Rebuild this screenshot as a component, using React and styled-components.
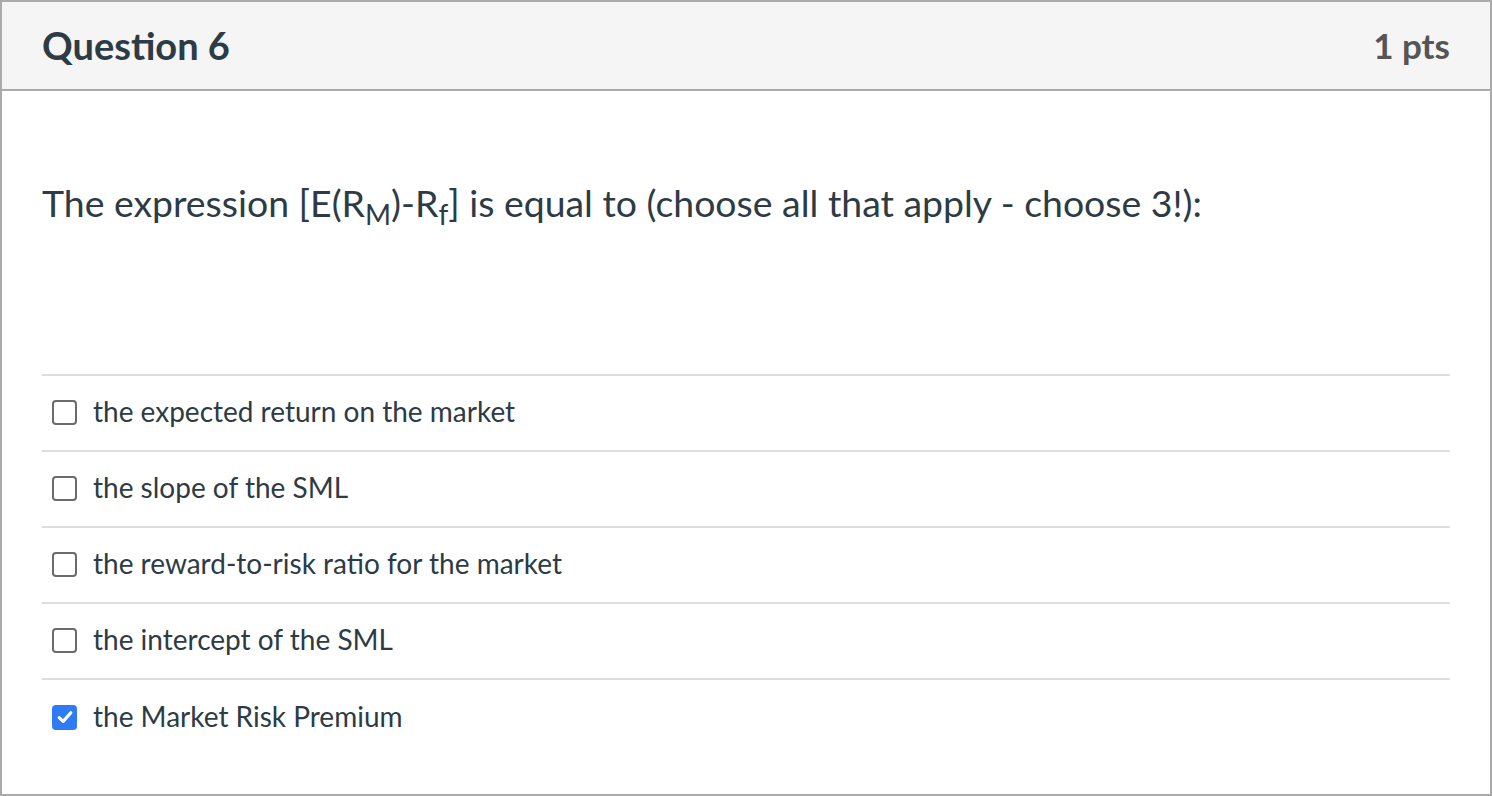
import styled, { createGlobalStyle } from "styled-components";

const Global = createGlobalStyle`
  html, body {
    margin: 0;
    padding: 0;
    background: #fff;
  }
  * { box-sizing: border-box; }
`;

const Card = styled.div`
  border: 2px solid #aaaaaa;
  height: 796px;
  display: flex;
  flex-direction: column;
  font-family: Lato, "Open Sans", sans-serif;
  color: #2d3b45;
`;

const Header = styled.div`
  display: flex;
  align-items: center;
  justify-content: space-between;
  height: 89px;
  padding: 0 40px 0 40px;
  background: #f5f5f5;
  border-bottom: 2px solid #aaaaaa;
`;

const Title = styled.h2`
  margin: 0;
  font-size: 38px;
  font-weight: 700;
  color: #2d3b45;
  padding-bottom: 2px;
`;

const Points = styled.div`
  font-size: 35px;
  font-weight: 700;
  color: #555555;
  padding-bottom: 2px;
`;

const Body = styled.div`
  padding: 0 40px 0 40px;
`;

const Prompt = styled.p`
  margin: 86px 0 0 0;
  font-size: 37.4px;
  line-height: 51px;
  color: #2d3b45;
`;

const Answers = styled.ul`
  list-style: none;
  margin: 146px 0 0 0;
  padding: 0;
  border-top: 2px solid #dddddd;
`;

const Answer = styled.li`
  display: flex;
  align-items: center;
  gap: 16px;
  height: 76px;
  padding: 0 0 0 10px;
  border-bottom: ${(p) => (p.$last ? "none" : "2px solid #dddddd")};
  font-size: 28px;
  padding-bottom: 4px;
`;

const Box = styled.span`
  flex: none;
  width: 25px;
  height: 25px;
  margin-top: 2px;
  border-radius: 4px;
  border: ${(p) => (p.$checked ? "none" : "2px solid #6b6b6b")};
  background: ${(p) => (p.$checked ? "#2f7bf5" : "#fff")};
  display: flex;
  align-items: center;
  justify-content: center;
`;

const Sub = styled.sub`
  font-size: 0.75em;
  vertical-align: -0.3em;
  line-height: 0;
`;

const answers = [
  { text: "the expected return on the market", checked: false },
  { text: "the slope of the SML", checked: false },
  { text: "the reward-to-risk ratio for the market", checked: false },
  { text: "the intercept of the SML", checked: false },
  { text: "the Market Risk Premium", checked: true },
];

export default function App() {
  return (
    <>
      <Global />
      <Card>
        <Header>
          <Title>Question 6</Title>
          <Points>1 pts</Points>
        </Header>
        <Body>
          <Prompt>
            The expression [E(R<Sub>M</Sub>)-R<Sub>f</Sub>] is equal to (choose all that apply - choose 3!):
          </Prompt>
          <Answers>
            {answers.map((a, i) => (
              <Answer key={i} $last={i === answers.length - 1}>
                <Box $checked={a.checked}>
                  {a.checked && (
                    <svg width="18" height="18" viewBox="0 0 18 18">
                      <path
                        d="M3.2 9.6 L7.2 13.4 L14.8 4.8"
                        fill="none"
                        stroke="#fff"
                        strokeWidth="3.2"
                        strokeLinecap="round"
                        strokeLinejoin="round"
                      />
                    </svg>
                  )}
                </Box>
                <span>{a.text}</span>
              </Answer>
            ))}
          </Answers>
        </Body>
      </Card>
    </>
  );
}
